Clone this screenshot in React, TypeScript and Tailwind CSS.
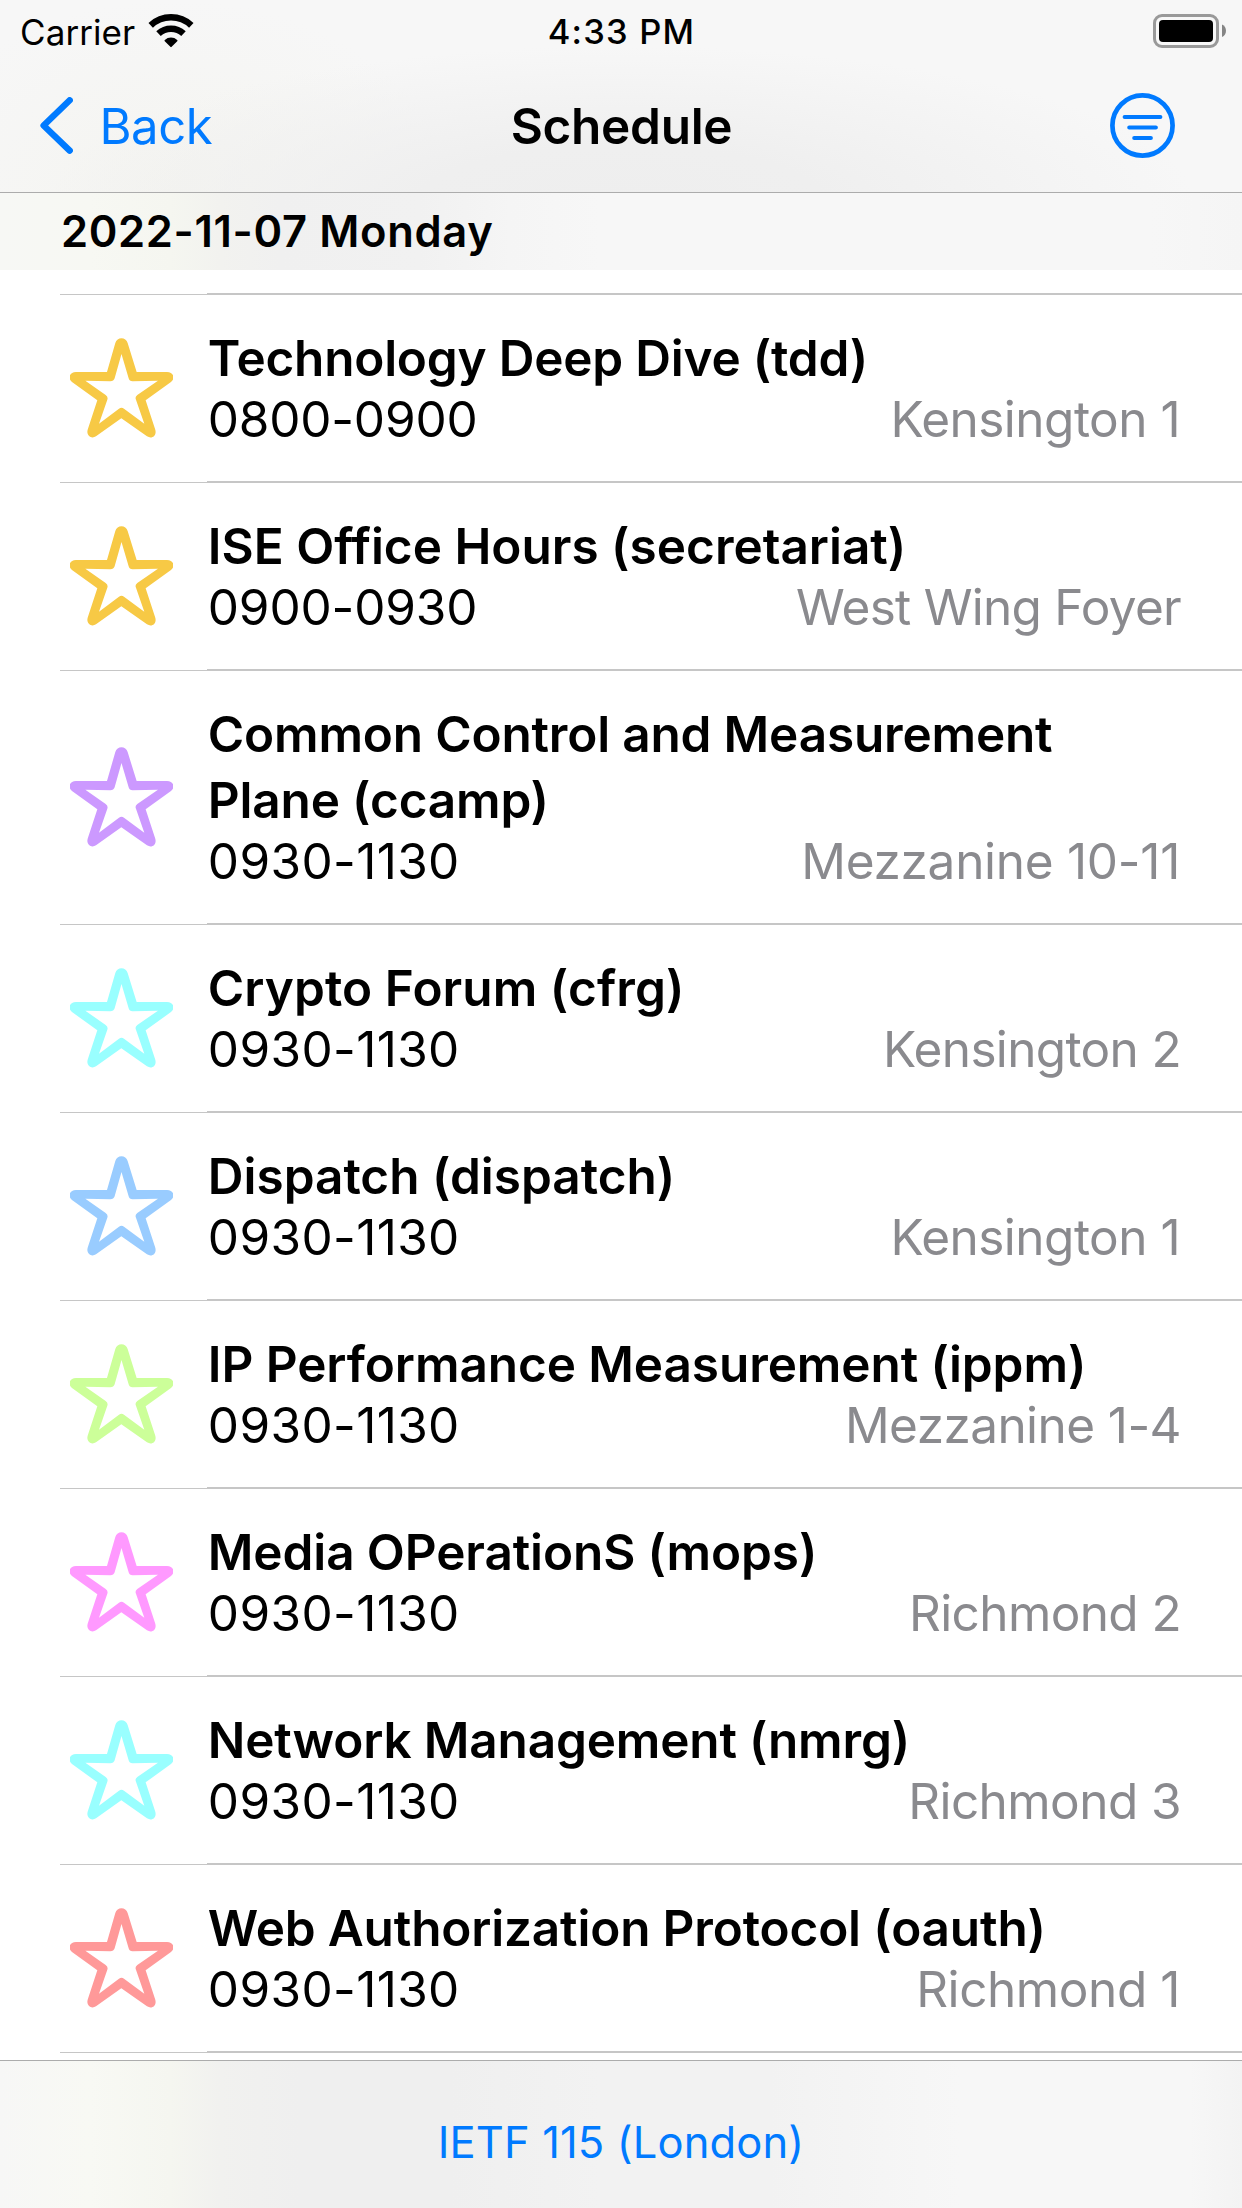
type Session = {
  title: string;
  titleClass: string;
  time: string;
  timeClass: string;
  room: string;
  roomClass: string;
  starClass: string;
};

const sessions: Session[] = [
  { title: "Technology Deep Dive (tdd)", titleClass: "tracking-[-0.22px]", time: "0800-0900", timeClass: "tracking-[-0.2px]", room: "Kensington 1", roomClass: "mr-px tracking-[-0.52px]", starClass: "text-[#f7c945]" },
  { title: "ISE Office Hours (secretariat)", titleClass: "tracking-[0px]", time: "0900-0930", timeClass: "tracking-[-0.15px]", room: "West Wing Foyer", roomClass: "tracking-[-0.73px]", starClass: "text-[#f7c945]" },
  { title: "Common Control and Measurement Plane (ccamp)", titleClass: "tracking-[-0.18px]", time: "0930-1130", timeClass: "tracking-[0.37px]", room: "Mezzanine 10-11", roomClass: "mr-px tracking-[-0.28px]", starClass: "text-[#cc99ff]" },
  { title: "Crypto Forum (cfrg)", titleClass: "tracking-[0.07px]", time: "0930-1130", timeClass: "tracking-[0.37px]", room: "Kensington 2", roomClass: "tracking-[-0.65px]", starClass: "text-[#99ffff]" },
  { title: "Dispatch (dispatch)", titleClass: "tracking-[-0.02px]", time: "0930-1130", timeClass: "tracking-[0.37px]", room: "Kensington 1", roomClass: "mr-px tracking-[-0.52px]", starClass: "text-[#99ccff]" },
  { title: "IP Performance Measurement (ippm)", titleClass: "tracking-[-0.08px]", time: "0930-1130", timeClass: "tracking-[0.37px]", room: "Mezzanine 1-4", roomClass: "tracking-[-0.57px]", starClass: "text-[#ccff99]" },
  { title: "Media OPerationS (mops)", titleClass: "tracking-[-0.11px]", time: "0930-1130", timeClass: "tracking-[0.37px]", room: "Richmond 2", roomClass: "tracking-[-0.6px]", starClass: "text-[#ff99ff]" },
  { title: "Network Management (nmrg)", titleClass: "tracking-[-0.16px]", time: "0930-1130", timeClass: "tracking-[0.37px]", room: "Richmond 3", roomClass: "tracking-[-0.57px]", starClass: "text-[#99ffff]" },
  { title: "Web Authorization Protocol (oauth)", titleClass: "tracking-[-0.17px]", time: "0930-1130", timeClass: "tracking-[0.37px]", room: "Richmond 1", roomClass: "mr-px tracking-[-0.42px]", starClass: "text-[#ff9999]" },
];

function WifiIcon() {
  return (
    <svg viewBox="0 0 46 34" className="h-[34px] w-[46px] shrink-0" fill="none" stroke="currentColor" strokeWidth="6.5">
      <path d="M2.7 11.3A29.7 29.7 0 0 1 43.3 11.3" />
      <path d="M10.5 19.6A18.3 18.3 0 0 1 35.5 19.6" />
      <path d="M23 32.2L17.4 26.6A8.4 8.4 0 0 1 28.6 26.6Z" fill="currentColor" strokeWidth="1.8" strokeLinejoin="round" />
    </svg>
  );
}

function BatteryIcon() {
  return (
    <svg viewBox="0 0 74 34" className="h-[34px] w-[74px] shrink-0">
      <rect x="1.5" y="1.5" width="63" height="31" rx="7.5" fill="none" stroke="#999999" strokeWidth="3" />
      <rect x="6" y="6" width="54" height="22" rx="4" fill="#000000" />
      <path d="M69 10.5C74.3 12.5 74.3 21 69 23Z" fill="#858585" />
    </svg>
  );
}

function BackChevron() {
  return (
    <svg viewBox="0 0 33 57" className="-mt-px h-[57px] w-[33px] shrink-0" fill="none" stroke="currentColor" strokeWidth="6.4" strokeLinecap="round" strokeLinejoin="round">
      <path d="M29.7 3.3L3.6 28.5L29.7 53.6" />
    </svg>
  );
}

function FilterIcon() {
  return (
    <svg viewBox="0 0 65 65" className="h-[65px] w-[65px]" fill="none" stroke="currentColor" strokeLinecap="round">
      <circle cx="32.5" cy="32.5" r="30.1" strokeWidth="4.7" />
      <path d="M14.6 23.9H50.4M19.2 34.4H45.9M24.2 45H40.9" strokeWidth="4" />
    </svg>
  );
}

function StarIcon({ className }: { className: string }) {
  return (
    <svg viewBox="59 50 310 299" className={`h-[99.7px] w-[103.3px] shrink-0 ${className}`}>
      <path
        fill="currentColor"
        fillRule="evenodd"
        d="M195 65C200 46 227 46 232 65L259 152H350C371 152 375 172 362 182L286 237L315 325C320 344 304 354 290 345L213 291L137 345C124 354 107 344 112 325L141 237L65 182C52 172 56 152 77 152H170Z
           M213.500 98L193 171Q190 180 180 180L105 178L166 221Q174 227 171 235L146 307L206 262Q213.500 256 221 262L282 307L257 235Q253 227 261 221L323 178L247 180Q237 180 235 171Z"
      />
    </svg>
  );
}

function Separator() {
  return (
    <div className="ml-[60px] flex h-[2px] items-end">
      <div className="h-px w-[147px] bg-[#c6c6c6]" />
      <div className="h-[2px] flex-1 bg-[#c6c6c6]" />
    </div>
  );
}

function SessionRow({ s }: { s: Session }) {
  return (
    <li>
      <Separator />
      <div className="flex items-center pr-[61px] pl-[69.5px]">
        <StarIcon className={s.starClass} />
        <div className="ml-[35px] flex-1 pt-[30px] pb-[34px] text-[49.5px]">
          <h2 className={`max-w-[880px] leading-[66px] font-semibold ${s.titleClass}`}>{s.title}</h2>
          <div className="flex justify-between leading-[56px]">
            <span className={s.timeClass}>{s.time}</span>
            <span className={`text-[#8a8a8e] ${s.roomClass}`}>{s.room}</span>
          </div>
        </div>
      </div>
    </li>
  );
}

export default function App() {
  return (
    <div className="flex h-[2208px] w-[1242px] flex-col overflow-hidden bg-white font-['Inter',sans-serif] text-black">
      <header className="h-[193px] shrink-0 border-b border-[#acacac] bg-[radial-gradient(ellipse_46%_80%_at_50%_104%,#eeeeee_0%,#efefef_35%,#f7f7f700_100%),radial-gradient(ellipse_22%_100%_at_14%_100%,#f4f4f0_0%,#f7f7f700_100%)] bg-[#f7f7f7]">
        <div className="grid h-[62px] grid-cols-[1fr_auto_1fr] items-center pr-[15px] pl-5 text-[35px] leading-[62px]">
          <div className="flex items-center gap-[13px]">
            <span className="tracking-[0.08px]">Carrier</span>
            <span className="-mt-[2px]"><WifiIcon /></span>
          </div>
          <div className="-ml-[4px] pt-px text-center text-[34.5px] font-medium tracking-[1.2px]">4:33 PM</div>
          <div className="-mt-[2px] flex justify-end"><BatteryIcon /></div>
        </div>
        <nav className="grid h-[128px] grid-cols-3 items-center pr-[67px] pl-[40px] text-[49.5px]">
          <button className="flex items-center gap-[26.5px] text-left text-[49px] tracking-[-0.47px] text-[#007aff]">
            <BackChevron />
            <span className="pt-px">Back</span>
          </button>
          <h1 className="pt-px pl-[28px] text-center font-semibold tracking-[-0.3px]">Schedule</h1>
          <button aria-label="Filter" className="-mt-[2px] justify-self-end text-[#007aff]">
            <FilterIcon />
          </button>
        </nav>
      </header>

      <main className="flex h-[1867px] shrink-0 flex-col bg-white">
        <div className="flex h-[77px] shrink-0 items-center bg-[linear-gradient(90deg,#f7f8f5_0px,#f7f8f3_90px,#f5f6f0_170px,#f2f2ef_220px,#f0f0f0_280px,#f1f1f1_420px,#f5f5f5_510px,#f7f7f7_600px,#f7f7f7_1150px,#f5f5f5_1242px)] pl-[61px] text-[43.5px] font-semibold tracking-[0.65px]">
          2022-11-07 Monday
        </div>
        <ul className="mt-[23px]">
          {sessions.map((s) => (
            <SessionRow key={s.title} s={s} />
          ))}
        </ul>
        <Separator />
      </main>

      <footer className="flex h-[148px] shrink-0 items-center justify-center border-t border-[#acacac] bg-[linear-gradient(90deg,#f7f7f6_0px,#f8f9f4_90px,#f5f6f0_170px,#f1f1ef_220px,#efefef_300px,#efefef_450px,#f2f2f2_600px,#f2f2f2_770px,#f7f7f7_960px,#f7f7f7_1190px,#f3f3f3_1242px)] pt-[16px]">
        <a className="text-[43.5px] tracking-[0.13px] text-[#007aff]">IETF 115 (London)</a>
      </footer>
    </div>
  );
}
